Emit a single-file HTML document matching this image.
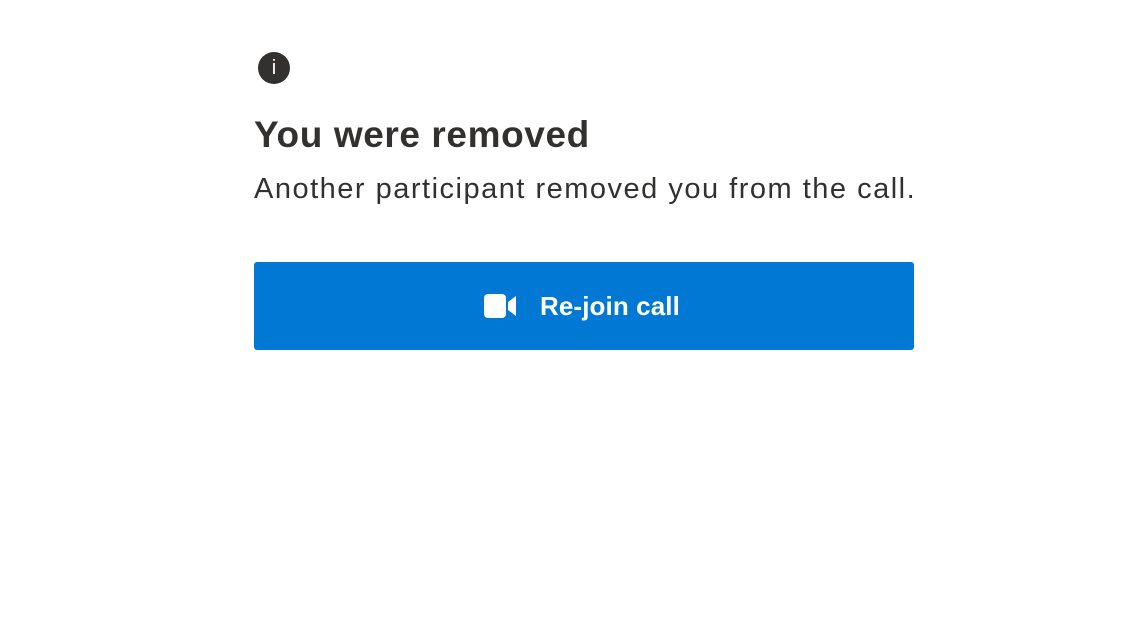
<!DOCTYPE html>
<html><head><style>
body{margin:0;width:1136px;height:640px;background:#fff;font-family:"Liberation Sans",sans-serif;color:#323130;position:relative;overflow:hidden}
.i{position:absolute;left:258px;top:52px;width:32px;height:32px;border-radius:50%;background:#323130;color:#fff;font-size:20px;text-align:center;line-height:32px}
h1{position:absolute;left:254px;top:113px;margin:0;font-size:37px;font-weight:bold;line-height:44px;white-space:nowrap;letter-spacing:0.6px}
p{position:absolute;left:254px;top:170px;margin:0;font-size:29px;line-height:38px;white-space:nowrap;letter-spacing:1.5px}
.b{position:absolute;left:254px;top:262px;width:660px;height:88px;background:#0078d4;border-radius:3px;color:#fff}
.t{position:absolute;left:286px;top:28px;font-size:26px;font-weight:bold;line-height:32px;white-space:nowrap;letter-spacing:0.1px}
</style></head><body>
<div class="i">i</div>
<h1>You were removed</h1>
<p>Another participant removed you from the call.</p>
<div class="b"><svg style="position:absolute;left:230px;top:32px" width="32" height="24" viewBox="0 0 32 24"><rect x="0" y="0" width="22" height="24" rx="4" fill="#fff"/><path d="M24 8 L32 2 V22 L24 16 Z" fill="#fff"/></svg><span class="t">Re-join call</span></div>
</body></html>
